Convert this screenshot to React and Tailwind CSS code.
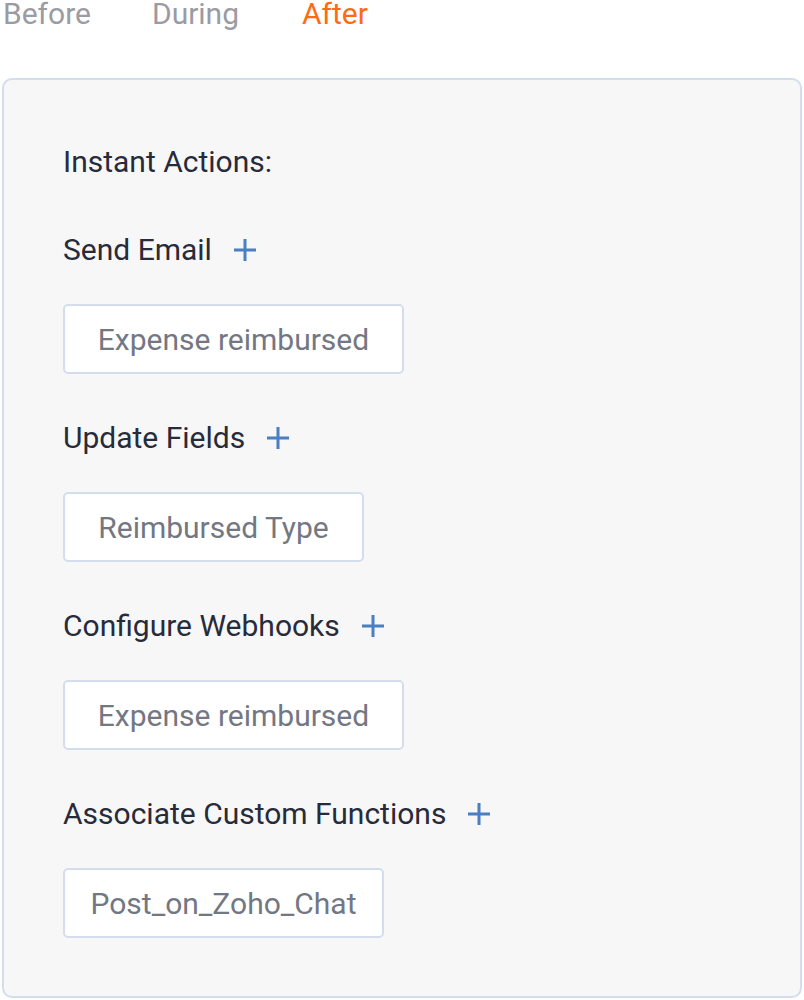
import React from "react";

function Plus() {
  return (
    <svg width="24" height="24" viewBox="0 0 24 24" className="shrink-0">
      <path d="M12 1 V23 M1 12 H23" stroke="#4a7fc1" strokeWidth="3" fill="none" />
    </svg>
  );
}

const sections = [
  { label: "Send Email", value: "Expense reimbursed", w: "w-[341px]", mt: "mt-[48px]" },
  { label: "Update Fields", value: "Reimbursed Type", w: "w-[301px]", mt: "mt-[44px]" },
  { label: "Configure Webhooks", value: "Expense reimbursed", w: "w-[341px]", mt: "mt-[44px]" },
  { label: "Associate Custom Functions", value: "Post_on_Zoho_Chat", w: "w-[321px]", mt: "mt-[44px]" },
];

export default function App() {
  return (
    <div className="w-[804px] h-[1000px] bg-white overflow-hidden font-['Roboto',sans-serif]">
      {/* TABS */}
      <div className="flex gap-[61px] pl-[3px] -mt-[6px] h-[40px] items-start text-[30px] leading-[40px]">
        <span className="text-[#9a9ba3]">Before</span>
        <span className="text-[#9a9ba3]">During</span>
        <span className="text-[#ff6a13] ml-[2px]">After</span>
      </div>

      {/* PANEL */}
      <div className="mt-[44px] ml-[2px] w-[800px] border-2 border-[#d3ddee] rounded-[10px] bg-[#f7f7f8] pl-[59px] pt-[62px] pb-[58px]">
        <div className="text-[30px] leading-[40px] text-[#272b3a]">Instant Actions:</div>

        {sections.map((s, i) => (
          <div key={i} className={s.mt}>
            <div className="flex items-center gap-[21px] h-[40px]">
              <span className="text-[30px] leading-[40px] text-[#272b3a]">{s.label}</span>
              <Plus />
            </div>
            <div
              className={`mt-[34px] ${s.w} h-[70px] flex items-center justify-center bg-white border-2 border-[#d3ddee] rounded-[5px] text-[30px] text-[#737783]`}
            >
              {s.value}
            </div>
          </div>
        ))}
      </div>
    </div>
  );
}
